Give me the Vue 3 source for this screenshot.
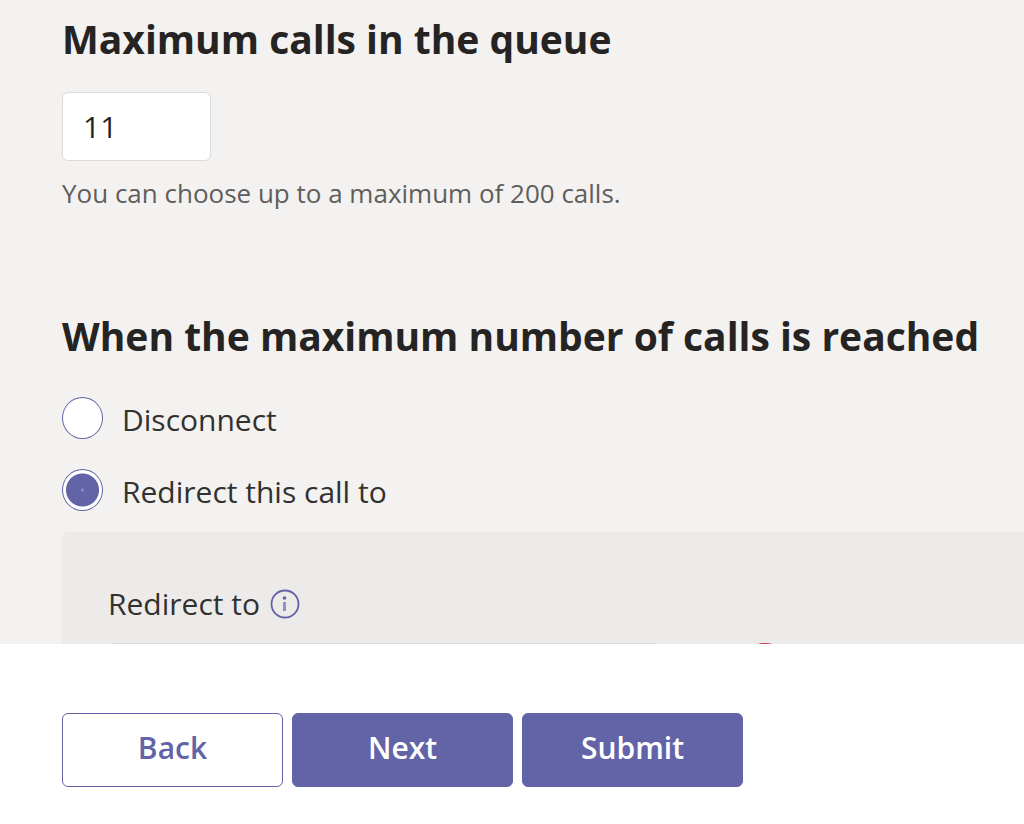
<script setup>
import { ref } from 'vue'

const maxCalls = ref('11')
const action = ref('redirect')
const target = ref('')
</script>

<template>
  <form class="page" @submit.prevent>
    <main class="content">
      <section class="group">
        <h2><label for="max-calls">Maximum calls in the queue</label></h2>
        <input id="max-calls" v-model="maxCalls" class="number" type="text" inputmode="numeric" aria-describedby="max-hint" />
        <p id="max-hint" class="hint">You can choose up to a maximum of 200 calls.</p>
      </section>

      <section class="group" role="radiogroup" aria-labelledby="overflow-title">
        <h2 id="overflow-title">When the maximum number of calls is reached</h2>
        <div class="options">
          <label class="option">
            <input v-model="action" type="radio" name="action" value="disconnect" />
            <span>Disconnect</span>
          </label>
          <label class="option">
            <input v-model="action" type="radio" name="action" value="redirect" />
            <span>Redirect this call to</span>
          </label>
        </div>
        <div class="panel">
          <div class="panel-label">
            <label for="target">Redirect to</label>
            <button class="info" type="button" aria-label="More information">
              <svg viewBox="0 0 30 30" width="30" height="30" fill="none" aria-hidden="true">
                <circle cx="15" cy="15" r="13.5" stroke="#6264a7" stroke-width="1.8" />
                <circle cx="14.5" cy="9" r="1.8" fill="#6264a7" />
                <path d="M14.5 13v9" stroke="#8f90c4" stroke-width="3" />
              </svg>
            </button>
          </div>
          <div class="panel-row">
            <select id="target" v-model="target" class="picker">
              <option value=""></option>
            </select>
            <span class="status"></span>
          </div>
        </div>
      </section>
    </main>

    <footer class="actions">
      <button class="btn outline" type="button">Back</button>
      <button class="btn" type="button">Next</button>
      <button class="btn" type="submit">Submit</button>
    </footer>
  </form>
</template>

<style>
body {
  margin: 0;
}
</style>

<style scoped>
.page {
  display: flex;
  flex-direction: column;
  height: 100vh;
  font-family: "Open Sans", "Noto Sans", sans-serif;
  font-size: 30px;
  line-height: 40px;
  color: #323130;
  background: #fff;
}
.page * {
  box-sizing: border-box;
}
.content {
  flex: 1;
  min-height: 0;
  overflow: hidden;
  padding: 12px 0 0 62px;
  background: #f3f2f1;
}
.group + .group {
  margin-top: 96px;
}
h2 {
  margin: 0;
  font-size: 39px;
  line-height: 54px;
  font-weight: 700;
  color: #252423;
  white-space: nowrap;
}
.number {
  display: block;
  width: 149px;
  height: 69px;
  margin-top: 26px;
  padding: 0 20px;
  border: 1px solid #dcdbda;
  border-radius: 6px;
  background: #fff;
  font: inherit;
  color: #252423;
}
.hint {
  margin: 12px 0 0;
  font-size: 26px;
  color: #605e5c;
}
.options {
  display: grid;
  gap: 30px;
  padding-top: 34px;
}
.option {
  display: flex;
  align-items: center;
  gap: 19px;
  height: 42px;
}
.option span {
  padding-top: 3px;
}
.option input {
  appearance: none;
  flex: none;
  width: 41px;
  height: 42px;
  margin: 0;
  border: 1px solid #6264a7;
  border-radius: 50%;
  background: #fff;
}
.option input:checked {
  background: radial-gradient(circle, #8b8cc7 1px, #6264a7 2px, #6264a7 16px, #fff 17px);
}
.panel {
  margin-top: 21px;
  padding: 52px 0 40px 46px;
  border-top-left-radius: 6px;
  background: #ecebe9;
}
.panel-label {
  display: flex;
  align-items: center;
  gap: 10px;
}
.info {
  display: flex;
  padding: 0;
  border: 0;
  background: none;
}
.panel-row {
  display: flex;
  align-items: flex-start;
  gap: 80px;
  margin-top: 19px;
}
.picker {
  appearance: none;
  width: 552px;
  height: 69px;
  border: 2px solid #dcdbda;
  border-radius: 6px;
  background: #fff;
}
.status {
  width: 50px;
  height: 50px;
  border: 3px solid #c4314b;
  border-radius: 50%;
}
.actions {
  display: flex;
  gap: 9px;
  padding: 69px 62px 37px;
}
.btn {
  width: 221px;
  height: 74px;
  padding: 0 16px 4px;
  border: 1px solid #6264a7;
  border-radius: 6px;
  background: #6264a7;
  color: #fff;
  font: inherit;
  font-weight: 600;
}
.outline {
  background: #fff;
  color: #6264a7;
}
</style>
